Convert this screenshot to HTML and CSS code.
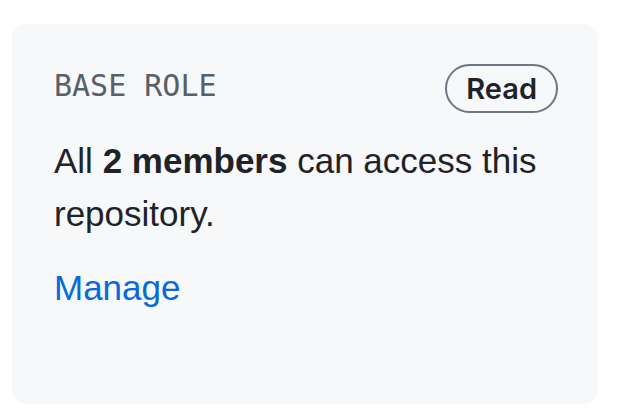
FILE: index.html
```html
<!DOCTYPE html>
<html>
<head>
<meta charset="utf-8">
<link rel="stylesheet" href="styles.css">
</head>
<body>
<div class="card">
  <div class="header">
    <span class="label">BASE ROLE</span>
    <span class="badge">Read</span>
  </div>
  <p class="desc">All <strong>2 members</strong> can access this repository.</p>
  <a class="link" href="#">Manage</a>
</div>
</body>
</html>
```
FILE: styles.css
```css
html, body {
  margin: 0;
  padding: 0;
  background: #ffffff;
}
body {
  padding: 24px 0 0 12px;
  font-family: "Liberation Sans", Arial, sans-serif;
}
.card {
  box-sizing: border-box;
  width: 586px;
  height: 380px;
  background: #f6f8fa;
  border-radius: 14px;
  padding: 40px 40px 40px 42px;
  display: flex;
  flex-direction: column;
  align-items: flex-start;
}
.header {
  align-self: stretch;
  display: flex;
  justify-content: space-between;
  align-items: center;
  height: 49px;
}
.label {
  font-family: "DejaVu Sans Mono", "Liberation Mono", monospace;
  font-size: 30px;
  color: #57606a;
  margin-top: -6px;
}
.badge {
  box-sizing: border-box;
  height: 49px;
  padding: 0 19px 0 19px;
  border: 2px solid #6e7781;
  border-radius: 25px;
  display: flex;
  align-items: center;
  font-family: Inter, "Liberation Sans", sans-serif;
  font-size: 29px;
  font-weight: 600;
  color: #1f2328;
}
.desc {
  margin: 22px 0 0;
  font-size: 35px;
  line-height: 52.5px;
  color: #1f2328;
}
.desc strong {
  font-weight: 700;
}
.link {
  margin-top: 22px;
  font-size: 35px;
  line-height: 52.5px;
  color: #0969da;
  text-decoration: none;
}
```
